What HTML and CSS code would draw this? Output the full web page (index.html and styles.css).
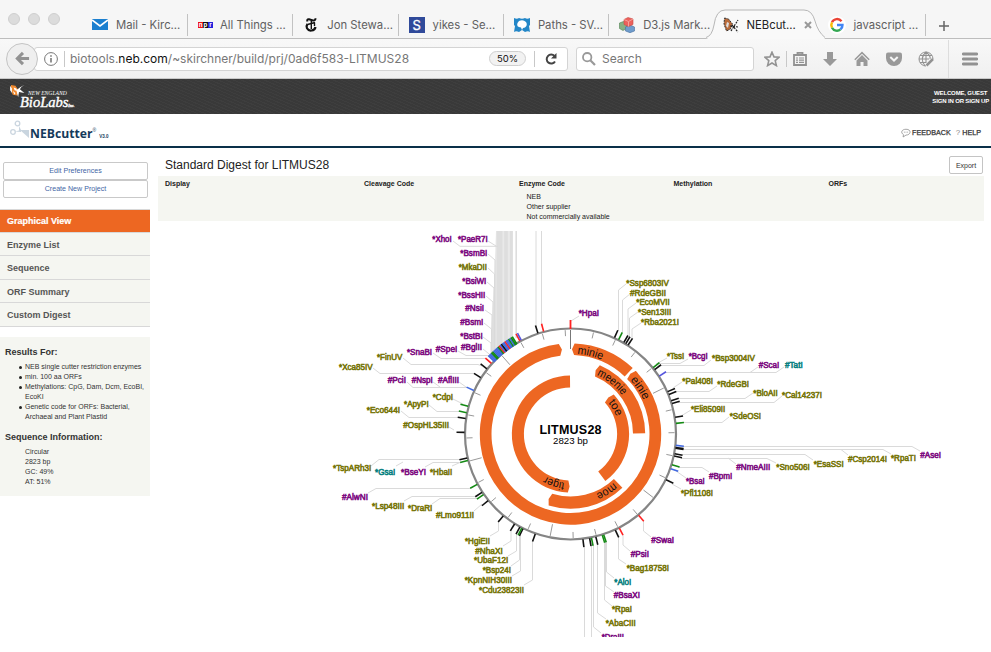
FILE: index.html
```html
<!DOCTYPE html>
<html lang="en">
<head>
<meta charset="utf-8">
<title>NEBcutter</title>
<link rel="stylesheet" href="styles.css">
</head>
<body>
<div class="tabs">
  <div class="lights"><i></i><i></i><i></i></div>
  <div class="tab first"><svg class="fav" viewBox="0 0 16 16"><path fill="#1b7fcf" d="M0 2h16v11H0z"/><path d="M0 3l8 6 8-6" fill="none" stroke="#fff" stroke-width="1.6"/></svg><span>Mail - Kirc...</span></div>
  <div class="tab"><span class="npr"><b>n</b><b>p</b><b>r</b></span><span>All Things ...</span></div>
  <div class="tab"><svg class="fav" viewBox="0 0 16 16" fill="none" stroke="#111"><path stroke-width="2" d="M4.500 4.500Q3.500 2 6 2.300L10 3.500Q12.500 3.800 12.500 1.300"/><path stroke-width="2.200" d="M4.500 7Q3 9 4 11.300Q5.500 14 8.500 13.500Q12 13 12.500 10"/><path stroke-width="1.400" d="M8.300 4v8M4.500 7.500L12 5.500M11.500 5.500V9"/></svg><span>Jon Stewa...</span></div>
  <div class="tab"><span class="sbox">S</span><span>yikes - Se...</span></div>
  <div class="tab"><svg class="fav" viewBox="0 0 16 16"><path fill="#2387c8" d="M0 1q3 1.500 5 0q3 1.500 6 0q2 1.500 5 0v7l-1 1 1 6q-2-1.500-5 0l-3-2-3 2q-3-1.500-5 0l1-6-1-1z"/><path fill="#fff" d="M5 4q4-2 7 1q2 3-1 5.500l-2 .5-1 2-1-2.500Q2 10 3.500 6z"/></svg><span>Paths - SV...</span></div>
  <div class="tab plain"><svg class="fav" viewBox="0 0 16 16"><path fill="#86b184" stroke="#4f8050" stroke-width=".6" d="M.5 6l4-1.500 3 2v5l-3.500 2-3.500-2z"/><path fill="#6f9ccc" stroke="#446f9f" stroke-width=".6" d="M6.500 10l4.500-2 4.500 2v4L11 15.700 6.500 14z"/><path fill="#ec625c" stroke="#c94a45" stroke-width=".6" d="M5 2.500L9 .5l5 1.500v5.500L9.500 9.500 5 7.500z"/><path fill="none" stroke="#f5a09b" d="M5 2.500l4.500 2L14 2M9.500 4.500v5"/></svg><span>D3.js Mark...</span></div>
  <div class="tab active"><svg class="curve" viewBox="0 0 120 30"><path fill="#f9f9f9" d="M0 30Q6 28 8 18Q10 1.500 19 1.500H98Q106 1.500 110 12T119 30z"/><path fill="none" stroke="#b7b7b7" d="M0 28.500Q6 27 8 16Q10 1 19 1H98Q106 1 109 12T119 28.500"/></svg><svg class="fav" viewBox="0 0 16 16"><path fill="#b96a38" stroke="#333" stroke-width="1" stroke-dasharray="2 1" d="M1.500 1l4 1 4 5-2 5-4 2L1 7z"/><path fill="#ddd" d="M4 5l2 1-1 5-2-2z"/><path fill="none" stroke="#222" stroke-width="1.200" stroke-dasharray="2 1" d="M8 14l7-11M9 8l6 7M7 9l8 1"/></svg><span>NEBcut...</span><svg class="close" viewBox="0 0 8 8"><path d="M1 1l6 6M7 1L1 7" stroke="#999" stroke-width="2"/></svg></div>
  <div class="tab google"><svg class="fav g" viewBox="0 0 18 18" fill="none" stroke-width="2.400"><circle cx="9" cy="9" r="9" fill="#fff"/><path stroke="#ea4335" d="M13.500 5.200A5.600 5.600 0 0 0 4 6.300"/><path stroke="#fbbc05" d="M4 6.300a5.600 5.600 0 0 0 0 5.400"/><path stroke="#34a853" d="M4 11.700a5.600 5.600 0 0 0 8.500 1.700"/><path stroke="#4285f4" d="M12.500 13.400Q14.600 11.500 14.500 9H9"/></svg><span>javascript ...</span></div>
  <svg class="plus" viewBox="0 0 10 10"><path d="M5 0v10M0 5h10" stroke="#666" stroke-width="1.500"/></svg>
</div>
<div class="toolbar">
  <div class="back"><svg viewBox="0 0 16 16"><path d="M15 8H3M8.500 2L2.500 8l6 6" fill="none" stroke="#929292" stroke-width="3.200"/></svg></div>
  <div class="url"><svg class="info" viewBox="0 0 14 14"><circle cx="7" cy="7" r="6.400" fill="none" stroke="#777"/><path d="M7 6v4.500M7 3.200v1.500" stroke="#666" stroke-width="1.400"/></svg><i class="bar"></i><span class="addr">biotools.<b>neb.com</b>/~skirchner/build/prj/0ad6f583-LITMUS28</span><span class="zoom">50%</span><i class="bar"></i><svg class="reload" viewBox="0 0 12 12"><path d="M10 8.500A4.500 4.500 0 1 1 9.500 3" fill="none" stroke="#444" stroke-width="2"/><path fill="#444" d="M11.500 0v5.500H6z"/></svg></div>
  <div class="search"><svg viewBox="0 0 14 14"><circle cx="5.200" cy="5.200" r="4.200" fill="none" stroke="#999" stroke-width="1.800"/><path d="M8.300 8.300L13 13" stroke="#999" stroke-width="2.200"/></svg><span>Search</span></div>
  <div class="tools">
    <svg viewBox="0 0 16 16"><path d="M8 1.200l2 4.700 5 .4-3.800 3.300 1.200 5L8 12l-4.400 2.600 1.200-5L1 6.300l5-.4z" fill="none" stroke="#929292" stroke-width="1.600"/></svg>
    <i class="bar"></i>
    <svg class="list" viewBox="0 0 16 16"><path d="M2 4h12v10H2zM5.500 4V1.800h5V4" fill="none" stroke="#929292" stroke-width="1.800"/><path d="M4 7h2m1 0h5M4 9.200h2m1 0h5M4 11.400h2m1 0h5" stroke="#929292" stroke-width="1.200"/></svg>
    <svg class="down" viewBox="0 0 16 16"><path fill="#999" d="M5 1h6v7h4l-7 7-7-7h4z"/></svg>
    <svg class="home" viewBox="0 0 16 16"><path fill="#999" d="M8 4l5.500 5.500V15h-4v-4h-3v4h-4V9.500z"/><path d="M.8 8.800L8 1.600l7.200 7.200" fill="none" stroke="#999" stroke-width="1.500"/></svg>
    <svg class="pocket" viewBox="0 0 16 16"><path fill="#999" d="M2 1.500h12q2 0 2 2V7a8 8 0 0 1-16 0V3.500q0-2 2-2z"/><path d="M4.300 6L8 9.500 11.700 6" fill="none" stroke="#f5f5f5" stroke-width="2"/></svg>
    <svg class="globe" viewBox="0 0 16 16" fill="none" stroke="#929292"><path d="M15 8A7 7 0 1 0 8 15"/><path stroke-width="1.100" d="M8 1v11M1 8h10M2 4.500h12M2 11.500h6M8 1Q1 7 7 15M8 1q5 4 4 7"/><path stroke-width="2.500" d="M8.500 14.500L15 8"/></svg>
    <i class="bar tall"></i>
    <svg class="menu" viewBox="0 0 16 16"><path d="M1.200 3h13.600M1.200 8h13.600M1.200 13h13.600" stroke="#929292" stroke-width="2.800" stroke-linecap="round"/></svg>
  </div>
</div>
<header class="dark">
  <div class="logo"><svg viewBox="0 0 20 18"><path fill="#f08a30" d="M1 1l5 1 4 6-2 5-5-1-2-5z"/><path fill="#fff" d="M0 2l2 3v5l-2-3zM4 4l3 1 1 3-3-1zM3 8l3 2-1 2zM7 7q4-4 9-6q-4 2-5 5l5 4-6-1-1 6z"/></svg><div><small>NEW ENGLAND</small><strong>BioLabs<em>Inc.</em></strong></div></div>
  <div class="welcome">WELCOME, GUEST<br>SIGN IN OR SIGN UP</div>
</header>
<header class="title">
  <div class="brand"><svg viewBox="0 0 22 20"><g fill="none" stroke="#cad5df" stroke-width="1.300"><circle cx="7.500" cy="3.500" r="2.300"/><circle cx="3" cy="12" r="2.300"/></g><path fill="#c9d5df" d="M10 10h9v8zM9 6l2 4-2 .5zM5 11.500l6-1.500v2z"/></svg><b>NEBcutter</b><sup>®</sup><small>V3.0</small></div>
  <div class="help"><svg viewBox="0 0 12 12"><path d="M6 1.500c7 0 6 7 0 7L2.500 10.800 3 8C-1 5.500 1 1.500 6 1.500z" fill="none" stroke="#888" stroke-width=".9"/><path d="M3.500 5h5" stroke="#888" stroke-dasharray="1 1"/></svg><span>FEEDBACK</span><b>?</b><span>HELP</span></div>
</header>
<div class="page">
  <aside>
    <div class="buttons"><a>Edit Preferences</a><a>Create New Project</a></div>
    <nav><a class="on">Graphical View</a><a>Enzyme List</a><a>Sequence</a><a>ORF Summary</a><a>Custom Digest</a></nav>
    <section class="results">
      <h3>Results For:</h3>
      <ul><li>NEB single cutter restriction enzymes</li><li>min. 100 aa ORFs</li><li>Methylations: CpG, Dam, Dcm, EcoBI,<br>EcoKI</li><li>Genetic code for ORFs: Bacterial,<br>Archaeal and Plant Plastid</li></ul>
      <h3>Sequence Information:</h3>
      <p>Circular<br>2823 bp<br>GC: 49%<br>AT: 51%</p>
    </section>
  </aside>
  <main>
    <div class="heading"><h1>Standard Digest for LITMUS28</h1><a>Export</a></div>
    <div class="options">
      <div><b>Display</b></div><div><b>Cleavage Code</b></div>
      <div><b>Enzyme Code</b><p>NEB<br>Other supplier<br>Not commercially available</p></div>
      <div><b>Methylation</b></div><div><b>ORFs</b></div>
    </div>
    <svg id="map" class="map" viewBox="158 231 833 406"></svg>
  </main>
</div>
<script src="map.js"></script>
</body>
</html>
```
FILE: map.js
```js
// Circular plasmid map: restriction sites outside the ring, ORFs inside it.
const CX = 570.5, CY = 434;
const svg = document.getElementById('map');
const NS = 'http://www.w3.org/2000/svg';

function add(name, attrs, text, parent = svg) {
  const el = document.createElementNS(NS, name);
  for (const k in attrs) el.setAttribute(k, attrs[k]);
  if (text) el.textContent = text;
  parent.appendChild(el);
  return el;
}
function pt(r, deg) {
  const a = deg * Math.PI / 180;
  return (CX + r * Math.sin(a)).toFixed(2) + ' ' + (CY - r * Math.cos(a)).toFixed(2);
}
function spoke(r1, r2, deg, color, width) {
  add('path', { d: `M${pt(r1, deg)}L${pt(r2, deg)}`, stroke: color, 'stroke-width': width });
}

// Leader lines from labels to sites
add('path', { fill: '#e9e9e9', d: 'M496 231H513V341L492 358L491 330L494 285Z' });
for (const [x, w, y] of [[499.5, 6, 350], [506, 3.6, 344], [511.3, 2.8, 341], [516.2, 1.6, 338]])
  add('path', { d: `M${x} 231V${y}`, stroke: '#dedede', 'stroke-width': w });
const leaders = [
  '536 231 536 327', '541.5 231 541.5 326', '453 241 460 246.300 498 246.300', '488 241 496 246', '488 254 495 260 495 352', '488 268 494.500 274 494.500 353',
  '487 282 494 288 494 354', '486 296 493 302 493 355', '485 310 492 315 492 356', '484 323 491.500 329 491.500 356', '483 337 491 343 491 356',
  '483 349 491 355.500', '458 351 466 355.500 491 355.500', '433 353 441 358.500 486 358.500', '403 358 411 364.500 478 364.500 482 366',
  '373 368 380 373.500 474 373.500', '407 382 413 387.500 467 387.500', '433 382 440 387', '459 382 466 387', '453 399 463 404',
  '429 405 437 411.500 460 411.500', '401 411 409 417.500 458 417.500', '449 427 454 430', '371 466 379 459.500 460 459.500',
  '396 466 403 462', '425 467 433 462.500 461 462.500', '452 466 461 462', '368 493 376 488.500 471 488.500',
  '404 501 412 496.500 476 496.500', '432 504 440 498.500 477 498.500', '474 511 482 504', '490 536 498.500 531 498.500 520',
  '503 546 511 541 511 530', '508 556 516.500 551 516.500 532', '511 566 519.500 560 519.500 534', '512 576 520.500 571 520.500 534',
  '524 585 532.500 580 532.500 540', '579 316 571 321', '626 284 618.500 290 618.500 331', '630 294 622.500 300 622.500 332',
  '636 303 628 309 628 337', '638 312 629.500 318 629.500 338', '641 323 632 329 632 340', '667 358 656 364',
  '688 359 680 363.500 658 363.500', '711 360 704 365.500 659 365.500', '758 367 750 372.500 664 372.500', '784 367 776 372.500 750 372.500',
  '682 382 673 388', '717 386 709 391.500 674 391.500', '753 393 745 398.500 677 398.500', '782 396 774 402.500 678 402.500',
  '691 410 681 416', '729 417 722 422.500 683 422.500', '920 451 912 446.500 683 446.500', '891 454 883 449.500 683 449.500',
  '848 455 841 449.500', '813 460 805 454.500 682 454.500', '776 463 767 458.500 681 458.500', '736 464 728 458', '709 472 702 467.500 678 467.500',
  '686 478 676 471', '681 489 672 484', '651 537 643.500 531 643.500 521', '630 551 623 545 623 535', '626 564 618.500 559 618.500 537',
  '614 578 606.500 572 606.500 541', '614 592 605.500 586 605.500 541', '612 606 604.500 600 604.500 541', '606 619 597.500 613 597.500 543',
  '601 633 593.500 627 593.500 545', '584.500 637 584.500 547', '591.500 637 591.500 546'
];
for (const p of leaders) add('polyline', { points: p, fill: 'none', stroke: '#dadada', 'stroke-width': 1 });

// Ring and scale (one mark per 100 bp)
for (let bp = 0; bp < 2823; bp += 100)
  spoke(bp === 0 ? 85 : bp % 500 ? 98 : 92, 104, bp / 2823 * 360, bp ? '#999' : '#777', 1);
add('circle', { cx: CX, cy: CY, r: 105.5, fill: 'none', stroke: '#858585', 'stroke-width': 2.2 });

// Sites: colour and the middle of the mark
const K = '#111', G = '#148a14', B = '#4169e1', R = '#f22';
const siteXY = [
  [K,616,334.3],[G,620.3,336.3],[K,625.7,339.3],[K,628,340],[K,630.3,341.7],[G,655.7,365.7],[K,657.7,367.3],['#55d',662,374.3],
  [K,670.7,390.3],[K,672.7,393],[K,674.3,399.7],[K,675,402.7],[K,678.3,416.7],[G,679.3,423],[B,679.3,445.7],[K,679,448],[K,679,448.8],
  [K,677.7,454.3],[K,677.3,456.7],[G,675,465.7],[B,673.7,469.7],[K,668.7,481],[R,640.7,517.7],[R,621,531.3],[K,616.7,533],
  [G,604.7,537.7],[G,603.3,538.3],[K,596.7,540.3],[G,592.3,542],[K,590.3,542],[K,583.3,542.3],[K,534.3,536.7],[K,521.7,531.3],
  [G,520.3,531],[K,518.3,530],[K,512.7,527],[K,501.3,518.3],[K,485.3,503],[G,481,496.3],[K,479,494.3],[G,474.3,486],[G,464.7,461.3],
  [K,464,458.7],[K,461,432.3],[K,462.3,418],[G,463.3,412],[G,464.3,405.3],[B,470.7,389],[K,477.7,375.7],[K,483.7,366.3],[R,489,361.3],
  [R,518.3,338],['#55d',519.7,337.3],[K,536.7,329.3],[R,542.7,328]
];
for (const [c, x, y] of siteXY)
  spoke(106, 114, Math.atan2(x - CX, CY - y) * 180 / Math.PI, c, 1.6);
[B,B,B,G,G,B,B,B,B,G,R,B,K,B,B,R,B,B,G,B,G,G].forEach((c, i) => spoke(104.5, 113.5, 313.6 + i * 0.74, c, 1.7));
spoke(105, 114, 0, R, 1.8);

// ORFs: outer/inner radius, tip angle, blunt end angle
const orfs = [[90.7,79,1,43.3],[90.7,79,-5.8,-314],[74.7,62.5,21.5,89.5],[58.6,46.6,46,143.5],[74.7,62.5,198.6,136],[58.6,46.6,181,359.5]];
for (const [ro, ri, tip, end] of orfs) {
  const dir = end > tip ? 1 : -1, sh = tip + dir * 1.6, big = Math.abs(end - sh) > 180 ? 1 : 0;
  const s = dir > 0 ? 1 : 0;
  add('path', { fill: '#ed6722', d: `M${pt((ro + ri) / 2, tip)}L${pt(ro, sh)}A${ro} ${ro} 0 ${big} ${s} ${pt(ro, end)}L${pt(ri, end)}A${ri} ${ri} 0 ${big} ${1 - s} ${pt(ri, sh)}Z` });
}
add('path', { fill: '#ed6722', d: `M${pt(84.8, 44.8)}L${pt(90.7, 46)}L${pt(90.7, 48)}L${pt(79, 48)}L${pt(79, 46)}Z` });
[['minie',80.5,4.8,25.5],['einie',80.5,48,24],['meenie',64.5,24,33],['toe',49,50.5,16],['moe',65,138.5,21],['tiger',49,187,20]].forEach(([t, r, a, len], i) => {
  add('path', { id: 'arc' + i, fill: 'none', d: `M${pt(r, a)}A${r} ${r} 0 0 1 ${pt(r, a + 60)}` });
  const tx = add('text', { class: 'orf' });
  add('textPath', { href: '#arc' + i, textLength: len, lengthAdjust: 'spacingAndGlyphs' }, t, tx);
});
add('text', { x: CX, y: 434, class: 'name', 'text-anchor': 'middle', textLength: 62 }, 'LITMUS28');
add('text', { x: CX, y: 444.3, class: 'size', 'text-anchor': 'middle', textLength: 35, lengthAdjust: 'spacingAndGlyphs' }, '2823 bp');

// Labels: text, left, right, baseline, class (p NEB, o not available, t other supplier)
const labels = [
['*XhoI',432.3,451.7,242.3,'p'],['*PaeR7I',458,487.7,242.3,'p'],['*BsmBI',460.3,487.3,256,'p'],['*MkaDII',458.7,487,270.3,'o'],
['*BsiWI',462.3,486.3,284.3,'p'],['*BssHII',458.3,485.3,298,'p'],['#NsiI',465.3,484,311.3,'p'],['#BsmI',460.3,483.3,325,'p'],
['*BstBI',460.3,482.7,339,'p'],['#BglII',461,482,350.3,'p'],['#SpeI',435.7,457.3,351.9,'p'],['*SnaBI',407,432,354.9,'p'],
['*FinUV',377,402.3,360,'o'],['*Xca85IV',339,372.7,370,'o'],['#PciI',387.7,406,383,'p'],['#NspI',411.7,432.7,383,'p'],
['#AflIII',438,459,383,'p'],['*CdpI',432.7,453,400.3,'o'],['*ApyPI',404,428.7,407,'o'],['*Eco644I',366.7,400,413.2,'o'],
['#OspHL35III',403.3,449,428.2,'o'],['*HpaI',578.7,599,316.2,'p'],['*Ssp6803IV',626.3,669,286.2,'o'],['#RdeGBII',630,666,296.2,'o'],
['*EcoMVII',636.3,669.7,305.3,'o'],['*Sen13III',638,671.3,315.3,'o'],['*Rba2021I',641,679,325,'o'],['*TssI',667,684.3,359.2,'o'],
['*BcgI',688.7,707.7,359.2,'p'],['*Bsp3004IV',712,755,361.2,'o'],['#ScaI',758.7,779.3,368.3,'p'],['#TatI',785,802.7,368.3,'t'],
['*Pal408I',682.3,713,384.3,'o'],['*RdeGBI',717.3,749,387.2,'o'],['*BloAII',753.3,777.7,395.5,'o'],['*Cal14237I',782,822,398.2,'o'],
['*Eli8509II',691,725.3,412.3,'o'],['*SdeOSI',729.7,761,419.3,'o'],['#AseI',920.3,941,458.3,'p'],['*RpaTI',891,916,461.2,'o'],
['#Csp2014I',848,887,461.9,'o'],['*EsaSSI',813.7,843.7,467.2,'o'],['*Sno506I',776.3,809.7,470.2,'o'],['#NmeAIII',736.3,770.3,470.3,'p'],
['#BpmI',709,732.3,479.3,'p'],['*BsaI',686,704.7,484.2,'p'],['*Pfl1108I',681,713,496,'o'],['#SwaI',651.3,674,543.2,'p'],
['#PsiI',630.7,649,557.2,'p'],['*Bag18758I',626.7,669,571.2,'o'],['*AloI',614.3,631.3,585.2,'t'],['#BsaXI',613.7,640,598.2,'p'],
['*RpaI',612,632,612.2,'o'],['*AbaCIII',605.7,635.7,626.2,'o'],['*DraIII',601.7,624,640,'p'],['*TspARh3I',333,371.3,471.2,'o'],
['*GsaI',375,395.3,475.2,'t'],['*BseYI',401,426,475.2,'p'],['*HbaII',430,452.3,475.2,'o'],['#AlwNI',342,368,500.2,'p'],
['*Lsp48III',372,404.3,509.3,'o'],['*DraRI',408,432.3,511.2,'o'],['#Lmo911II',436,474,518.2,'o'],['*HgiEII',465,490,544.2,'o'],
['#NhaXI',475.3,502.7,554.2,'o'],['*UbaF12I',474,508.3,563.3,'o'],['*Bsp24I',482.7,511,573.3,'o'],['*KpnNIH30III',464.7,512,583.3,'o'],
['*Cdu23823II',479,524,593.3,'o']];
for (const [t, x1, x2, y, c] of labels)
  add('text', { x: x1, y, class: 'site ' + c, textLength: (x2 - x1).toFixed(1), lengthAdjust: 'spacingAndGlyphs' }, t);
```
FILE: styles.css
```css
* { box-sizing: border-box; }
body { margin: 0; width: 991px; height: 652px; overflow: hidden; background: #fff; color: #333; font-family: "Liberation Sans", Arial, sans-serif; }
svg { display: block; flex: none; }
.tabs { display: flex; height: 39px; padding-top: 1px; background: #f6f6f6; border-bottom: 1px solid #bdbdbd; font: 11.3px Inter, Roboto, sans-serif; color: #606060; white-space: nowrap; }
.lights { display: flex; gap: 8px; width: 83px; padding: 12px 0 0 8px; }
.lights i { width: 12px; height: 12px; border-radius: 50%; background: #dcdcdc; border: 1px solid #cfcfcf; }
.tab { position: relative; display: flex; align-items: center; gap: 8px; width: 105.3px; height: 22px; margin-top: 13px; padding-left: 10px; border-right: 1px solid #c2c2c2; }
.tab span { position: relative; }
.first { width: 105px; padding-left: 9px; }
.plain { border: 0; }
.fav { position: relative; width: 16px; height: 16px; }
.npr { display: flex; width: 15px; height: 6px; margin-right: -1px; }
.npr b { flex: 1; color: #fff; font-size: 6px; line-height: 5px; text-align: center; background: #e11; }
.npr b:nth-child(2) { background: #111; }
.npr b:nth-child(3) { background: #22d; }
.sbox { width: 16px; height: 16px; background: #304a9a; color: #fff; font-size: 13px; line-height: 16px; text-align: center; -webkit-text-stroke: .3px #fff; }
.active { color: #222; border: 0; padding-left: 9px; width: 107px; gap: 7px; }
.curve { position: absolute; left: -8px; top: -5px; width: 120px; height: 30px; }
.close { position: relative; width: 8px; height: 8px; margin-left: 1px; }
.google { width: 104.5px; padding-left: 7px; }
.fav.g { width: 18px; height: 18px; margin-right: -1px; }
.plus { width: 10px; height: 10px; margin: 20px 0 0 13px; }
.toolbar { position: relative; display: flex; align-items: center; height: 40px; padding-left: 6px; background: linear-gradient(#f8f8f8, #f0f0f0); border-bottom: 1px solid #c9c9c9; font-family: Inter, Roboto, sans-serif; }
.back { position: relative; z-index: 1; display: flex; align-items: center; justify-content: center; width: 32px; height: 32px; border: 1px solid #c4c4c4; border-radius: 50%; background: #efefef; }
.back svg { width: 15px; height: 15px; }
.url { display: flex; align-items: center; width: 534px; height: 24px; margin-left: -4px; padding-left: 9px; border: 1px solid #d4d4d4; border-radius: 3px; background: #fff; }
.info { width: 14px; height: 14px; margin-right: 6px; }
.bar { flex: none; width: 1px; height: 16px; background: #c8c8c8; }
.addr { width: 424px; padding-left: 5px; font-size: 12px; color: #777; white-space: nowrap; }
.addr b { color: #111; font-weight: 400; }
.zoom { width: 37px; height: 15px; margin-right: 8px; border: 1px solid #cfcfcf; border-radius: 8px; background: #f2f2f2; color: #111; font-size: 9.5px; line-height: 13px; text-align: center; }
.reload { width: 12px; height: 12px; margin-left: 10px; }
.search { display: flex; align-items: center; gap: 6px; width: 178px; height: 24px; margin-left: 8px; padding-left: 5px; border: 1px solid #d4d4d4; border-radius: 3px; background: #fff; color: #777; font-size: 12px; }
.search svg { width: 14px; height: 14px; }
.tools { display: flex; align-items: center; height: 39px; margin-left: 10px; }
.tools svg { width: 16px; height: 16px; }
.tools > .bar { margin: 0 5px 0 6px; }
.tools .home, .tools .pocket, .tools .globe { margin-left: 16px; }
.tools .down { margin-left: 14px; }
.tools > .tall { height: 38px; margin: 0 13px 0 14px; background: #ddd; }
.dark { display: flex; justify-content: space-between; height: 35px; padding: 5px 2px 0 10px; background: repeating-linear-gradient(23deg, #393939 0 2px, #3e3e3e 2px 3px); color: #fff; }
.logo { display: flex; font-family: "Liberation Serif", serif; font-style: italic; }
.logo svg { width: 18px; height: 16px; }
.logo > div { display: flex; flex-direction: column; margin-left: -8px; padding-top: 6px; }
.logo small { margin-left: 8px; font-size: 5.6px; line-height: 6px; white-space: nowrap; }
.logo strong { font-size: 14.5px; line-height: 13px; font-weight: 400; -webkit-text-stroke: .4px #fff; }
.logo em { font-size: 4px; }
.welcome { padding-top: 4.5px; font-size: 6px; line-height: 8px; font-weight: 700; text-align: center; letter-spacing: -.15px; }
.title { display: flex; justify-content: space-between; height: 34px; border-bottom: 2px solid #0a3049; padding: 0 10px; }
.brand { display: flex; align-items: flex-start; color: #153a5b; }
.brand svg { width: 22px; height: 20px; margin-top: 6px; }
.brand b { margin: 13px 0 0 -2px; font: 700 12.200px/14px "Open Sans", sans-serif; }
.brand sup { margin-top: 13px; font-size: 5px; line-height: 6px; }
.brand small { margin: 20px 0 0 3px; font-size: 4.5px; line-height: 6px; font-weight: 700; }
.help { display: flex; align-items: center; padding-top: 5px; font-size: 7.2px; color: #333; -webkit-text-stroke: .25px #333; }
.help svg { width: 10px; height: 10px; margin-right: 1px; }
.help b { margin: 0 2px 0 5px; color: #888; font-weight: 400; font-size: 8px; -webkit-text-stroke: 0; }
.page { display: flex; }
aside { width: 150px; padding-top: 14px; }
.buttons { padding: 0 2px 0 3px; }
.buttons a { display: block; height: 18px; border: 1px solid #c9c9c9; border-radius: 2px; color: #3f66a5; font-size: 7.1px; line-height: 16px; text-align: center; }
nav { margin-top: 11px; border-top: 1px solid #d8d8d8; }
nav a { display: block; height: 23.45px; padding-left: 7px; background: #f5f6f1; border-bottom: 1.500px solid #d8d8d8; color: #555; font-size: 9px; line-height: 25px; font-weight: 700; }
nav .on { height: 23px; background: #ed6722; color: #fff; line-height: 22px; -webkit-text-stroke: .2px #fff; }
.results { height: 159px; margin-top: 10px; padding: 8px 0 0 5px; background: #f5f6f1; font-size: 7px; line-height: 10px; white-space: nowrap; }
h3 { margin: 0; font-size: 9px; line-height: 14px; color: #333; }
.results ul { margin: 3px 0 8px; padding: 0 0 0 20px; list-style: none; }
.results li::before { content: ""; float: left; width: 3px; height: 3px; margin: 4px 0 0 -6.5px; border-radius: 50%; background: #222; }
.results p { margin: 3px 0 0 20px; }
main { width: 841px; padding-left: 8px; }
.heading { display: flex; justify-content: space-between; height: 28px; padding: 8px 8px 0 7px; }
h1 { margin: 0; font-size: 12px; line-height: 18px; font-weight: 400; color: #222; }
.heading a { width: 34px; height: 18px; border: 1px solid #c4c4c4; border-radius: 2px; font-size: 7px; line-height: 17px; text-align: center; }
.options { display: grid; grid-template-columns: 199px 155px 154.5px 155px 1fr; width: 826px; height: 45px; padding: 3px 0 0 7px; background: #f5f6f1; font-size: 7px; line-height: 10px; color: #222; }
.options b { display: block; }
.options p { margin: 3px 0 0 7.500px; }
.map { width: 833px; height: 406px; margin-top: 10px; overflow: hidden; }
.site { font-size: 8.8px; stroke-width: .6px; }
.p { fill: #7d0a80; stroke: #7d0a80; }
.o { fill: #767508; stroke: #767508; }
.t { fill: #087f80; stroke: #087f80; }
.orf { font-size: 11.5px; fill: #111; }
.name { font-size: 12.5px; font-weight: 700; fill: #000; }
.size { font-size: 9.5px; fill: #000; }
```
